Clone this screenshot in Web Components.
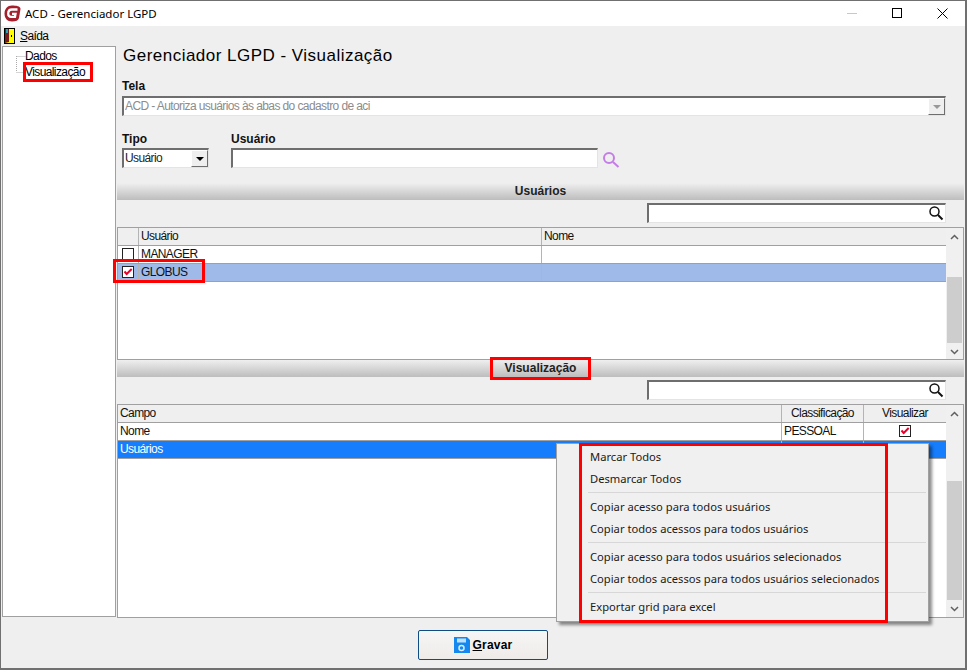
<!DOCTYPE html>
<html lang="pt-BR">
<head>
<meta charset="utf-8">
<title>ACD - Gerenciador LGPD</title>
<style>
  html, body { margin: 0; padding: 0; background: #fff; }
  body { width: 971px; height: 671px; overflow: hidden; font-family: "Liberation Sans", Arial, sans-serif; }
</style>
</head>
<body>
<app-window></app-window>
<script>
const base = `
  * { box-sizing: border-box; }
  :host { box-sizing: border-box; font-family: "Liberation Sans", Arial, sans-serif; font-size: 12px; letter-spacing: -.6px; color: #000; }
`;

class TitleBar extends HTMLElement {
  constructor() {
    super();
    this.attachShadow({ mode: 'open' }).innerHTML = `
      <style>${base}
        :host { display: flex; align-items: center; height: 25px; background: #fff; padding-left: 3px; letter-spacing: 0; }
        .name { margin-left: 4px; font-family: "Noto Sans", sans-serif; font-size: 11.500px; }
        .btns { margin-left: auto; display: flex; align-items: center; }
        .b { width: 45px; height: 25px; display: flex; align-items: center; justify-content: center; }
      </style>
      <svg width="17" height="17" viewBox="0 0 17 17">
        <path d="M8 .500C12 .500 16.500 1 16.500 4L15 13c-.500 2.500-3 3.500-7 3.500C3 16.500.500 13 .500 8.500S3.500.500 8 .500z" fill="#a3202c"/>
        <path d="M13.500 4.500H8C5.500 4.500 4.200 6.500 4.200 8.800c0 1.800 1 3 3 3H11l.5-3H8" fill="none" stroke="#fff" stroke-width="2.300"/>
      </svg>
      <span class="name">ACD - Gerenciador LGPD</span>
      <div class="btns">
        <div class="b"><svg width="11" height="11"><path d="M0 5.500h10" stroke="#c8c8c8"/></svg></div>
        <div class="b"><svg width="11" height="11"><rect x=".5" y=".5" width="9" height="9" fill="none" stroke="#000"/></svg></div>
        <div class="b"><svg width="11" height="11"><path d="M.5.500l10 10M10.500.500l-10 10" stroke="#000" fill="none"/></svg></div>
      </div>`;
  }
}

class MenuBar extends HTMLElement {
  constructor() {
    super();
    this.attachShadow({ mode: 'open' }).innerHTML = `
      <style>${base}
        :host { display: flex; align-items: center; height: 20px; padding-left: 3px; background: #efefef; }
        span { margin-left: 5px; }
        u { text-underline-offset: 1px; }
      </style>
      <svg width="11" height="16" viewBox="0 0 11 16">
        <rect width="11" height="16" fill="#000"/>
        <rect x="1" y="1" width="9" height="14" fill="#ff0"/>
        <path d="M1 1h4v13l-4 1z" fill="#7a1c1c"/>
        <rect x="2" y="1" width="2" height="4" fill="#2aa6b8"/>
        <rect x="7" y="7" width="1" height="2" fill="#000"/>
      </svg>
      <span><u>S</u>aída</span>`;
  }
}

class TreeNav extends HTMLElement {
  constructor() {
    super();
    this.attachShadow({ mode: 'open' }).innerHTML = `
      <style>${base}
        :host { display: block; width: 114px; height: 571px; background: #fff; border: 1px solid #a0a0a0; position: relative; padding: 1px 0 0 22px; }
        div.item { height: 16px; line-height: 16px; }
        svg { position: absolute; left: 10px; top: 0; }
      </style>
      <svg width="14" height="30"><path d="M3.500 9.500h10M3.500 9v16M3.500 25.500h10" stroke="#aaa" stroke-dasharray="1 1" fill="none"/></svg>
      <div class="item">Dados</div>
      <div class="item">Visualização</div>`;
  }
}

class FieldLabel extends HTMLElement {
  constructor() {
    super();
    this.attachShadow({ mode: 'open' }).innerHTML = `
      <style>${base}
        :host { display: block; font-size: 12px; font-weight: bold; height: 14px; line-height: 14px; letter-spacing: 0; color: #111; }
      </style><slot></slot>`;
  }
}

class SunkenBox extends HTMLElement {
  constructor() {
    super();
    const drop = this.getAttribute('drop');
    const disabled = this.hasAttribute('disabled');
    const search = this.hasAttribute('search');
    this.attachShadow({ mode: 'open' }).innerHTML = `
      <style>${base}
        :host { display: flex; height: 20px; background: #fff; border: 1px solid; border-color: #6e6e6e #e4e4e4 #e4e4e4 #6e6e6e; border-top-width: 2px; border-left-width: 2px; align-items: center; padding-left: 1px; position: relative; }
        .t { flex: 1; color: ${disabled ? '#8c8c8c' : '#222'}; white-space: nowrap; padding-bottom: 1px; }
        .arrow { width: 17px; height: 17px; background: #efefef; border: 1px solid; border-color: #fff #6e6e6e #6e6e6e #fff; display: flex; align-items: center; justify-content: center; flex: none; }
        .arrow i { width: 0; height: 0; border: 4px solid transparent; border-bottom-width: 0; border-top: 4px solid ${disabled ? '#999' : '#000'}; }
        svg { position: absolute; right: 1px; top: 0; }
      </style>
      <span class="t"><slot></slot></span>
      ${drop !== null ? '<span class="arrow"><i></i></span>' : ''}
      ${search ? `<svg width="16" height="16" viewBox="0 0 16 16"><circle cx="6.500" cy="6.500" r="4.500" fill="none" stroke="#111" stroke-width="1.500"/><path d="M10 10l4.500 4.500" stroke="#111" stroke-width="2"/></svg>` : ''}`;
  }
}

class SectionBar extends HTMLElement {
  constructor() {
    super();
    this.attachShadow({ mode: 'open' }).innerHTML = `
      <style>${base}
        :host { display: flex; justify-content: center; align-items: center; height: 17px; padding-bottom: 2px; font-size: 12px; letter-spacing: 0; font-weight: bold; color: #222; background: linear-gradient(#efefef, #bdbdbd); }
      </style><slot></slot>`;
  }
}

class CheckBox extends HTMLElement {
  constructor() {
    super();
    const on = this.hasAttribute('checked');
    this.attachShadow({ mode: 'open' }).innerHTML = `
      <style>:host { box-sizing: border-box; display: inline-flex; width: 12px; height: 12px; background: #fff; border: 1px solid #222; }</style>
      ${on ? '<svg width="10" height="10" viewBox="0 0 10 10"><path d="M1.500 4.500l2.200 2.500 5-5" fill="none" stroke="#e8002a" stroke-width="2"/></svg>' : ''}`;
  }
}

class ScrollBar extends HTMLElement {
  constructor() {
    super();
    const start = this.getAttribute('start');
    const size = this.getAttribute('size');
    this.attachShadow({ mode: 'open' }).innerHTML = `
      <style>${base}
        :host { display: flex; flex-direction: column; width: 17px; background: #f0f0f0; flex: none; }
        .a { height: 18px; display: flex; align-items: center; justify-content: center; flex: none; }
        .track { flex: 1; padding: ${start}px 1px 0 1px; }
        .thumb { height: ${size}px; background: #cdcdcd; }
      </style>
      <div class="a"><svg width="9" height="6"><path d="M1 5l3.500-3.500L8 5" fill="none" stroke="#606060" stroke-width="1.500"/></svg></div>
      <div class="track"><div class="thumb"></div></div>
      <div class="a"><svg width="9" height="6"><path d="M1 1l3.500 3.500L8 1" fill="none" stroke="#606060" stroke-width="1.500"/></svg></div>`;
  }
}

class DataGrid extends HTMLElement {
  constructor() {
    super();
    this.attachShadow({ mode: 'open' }).innerHTML = `
      <style>${base}
        :host { display: flex; background: #fff; border: 1px solid #a0a0a0; }
        .cols { flex: 1; min-width: 0; }
      </style>
      <div class="cols"><slot></slot></div>
      <slot name="bar"></slot>`;
  }
}

class GridRow extends HTMLElement {
  constructor() {
    super();
    const cols = this.getAttribute('cols');
    const kind = this.getAttribute('kind');
    const bg = { head: '#efefef', soft: '#9fbae8', sel: '#167dfd' }[kind] || '#fff';
    this.attachShadow({ mode: 'open' }).innerHTML = `
      <style>${base}
        :host { display: grid; grid-template-columns: ${cols}; height: 18px; background: ${bg}; border-bottom: 1px solid #a0a0a0; color: ${kind === 'sel' ? '#fff' : '#111'}; }
      </style><slot></slot>`;
  }
}

class GridCell extends HTMLElement {
  constructor() {
    super();
    const center = this.hasAttribute('center');
    this.attachShadow({ mode: 'open' }).innerHTML = `
      <style>${base}
        :host { display: flex; align-items: center; color: inherit; overflow: hidden; white-space: nowrap; padding: 0 0 1px 2px; border-right: 1px solid #b4b4b4; ${center ? 'justify-content: center; padding-left: 0;' : ''} }
        :host(:last-child) { border-right: 0; }
      </style><slot></slot>`;
  }
}

class ContextMenu extends HTMLElement {
  constructor() {
    super();
    this.attachShadow({ mode: 'open' }).innerHTML = `
      <style>${base}
        :host { position: absolute; left: 555px; top: 442px; width: 373px; height: 179px; background: #f0f0f0; border: 1px solid #a0a0a0; box-shadow: 3px 3px 3px rgba(0,0,0,.45); padding: 2px 2px 0; font-family: "Noto Sans", sans-serif; font-size: 11.200px; letter-spacing: 0; color: #1a1a1a; }
      </style><slot></slot>`;
  }
}

class MenuEntry extends HTMLElement {
  constructor() {
    super();
    this.attachShadow({ mode: 'open' }).innerHTML = `
      <style>
        :host { display: flex; align-items: center; height: 22px; padding: 0 0 2px 31px; white-space: nowrap; box-sizing: border-box; }
      </style><slot></slot>`;
  }
}

class MenuRule extends HTMLElement {
  constructor() {
    super();
    this.attachShadow({ mode: 'open' }).innerHTML = `
      <style>:host { display: block; height: 1px; background: #d7d7d7; margin: 2px 0 3px 29px; width: 338px; }</style>`;
  }
}

class SaveButton extends HTMLElement {
  constructor() {
    super();
    this.attachShadow({ mode: 'open' }).innerHTML = `
      <style>${base}
        :host { display: flex; align-items: center; justify-content: center; width: 130px; height: 30px; padding-bottom: 1px; border: 1px solid #0f4c81; border-radius: 2px; background: linear-gradient(#f6f6f6, #efebe8); font-size: 12px; font-weight: bold; letter-spacing: .2px; gap: 3px; }
      </style>
      <svg width="16" height="16" viewBox="0 0 16 16">
        <path d="M0 0h13l3 3v13H0z" fill="#1488ee"/>
        <rect x="3" y="1.500" width="9" height="4" fill="#bfe0fb"/>
        <circle cx="7.500" cy="11" r="2.500" fill="none" stroke="#d8ecfd" stroke-width="1.500"/>
      </svg>
      <span><u>G</u>ravar</span>`;
  }
}

class RedMark extends HTMLElement {
  constructor() {
    super();
    const [x, y, w, h] = this.getAttribute('box').split(' ');
    this.attachShadow({ mode: 'open' }).innerHTML = `
      <style>:host { position: absolute; left: ${x}px; top: ${y}px; width: ${w}px; height: ${h}px; border: 3px solid #f00; box-sizing: border-box; pointer-events: none; }</style>`;
  }
}

class AppWindow extends HTMLElement {
  constructor() {
    super();
    const usersCols = '21px 403px 1fr';
    const viewCols = '664px 82px 1fr';
    this.attachShadow({ mode: 'open' }).innerHTML = `
      <style>${base}
        :host { display: flex; flex-direction: column; position: relative; width: 967px; height: 670px; background: #efefef; border: 1px solid #707070; border-width: 1px 2px 2px 1px; }
        .body { display: flex; padding-left: 1px; flex: 1; gap: 1px; }
        .main { flex: 1; min-width: 0; display: flex; flex-direction: column; padding-right: 1px; }
        h1 { margin: 0; height: 20px; font-size: 17px; line-height: 20px; font-weight: normal; padding-left: 6px; letter-spacing: .48px; white-space: nowrap; }
        .tela { padding: 13px 18px 0 5px; }
        .tela sunken-box { margin-top: 3px; }
        .row { display: flex; gap: 22px; padding: 16px 0 0 5px; align-items: flex-start; }
        .row sunken-box { margin-top: 2px; }
        .usearch { display: flex; align-items: flex-start; }
        .usearch svg { margin: 5px 0 0 4px; }
        .bar { margin-top: 14px; }
        .search { display: flex; justify-content: flex-end; padding: 3px 18px 4px 0; }
        .search sunken-box { width: 299px; }
        .users { height: 133px; }
        .views { height: 214px; }
        .foot { display: flex; justify-content: center; padding: 12px 115px 0 0; }
      </style>
      <title-bar></title-bar>
      <menu-bar></menu-bar>
      <div class="body">
        <tree-nav></tree-nav>
        <div class="main">
          <h1>Gerenciador LGPD - Visualização</h1>
          <div class="tela">
            <field-label>Tela</field-label>
            <sunken-box disabled drop="1">ACD - Autoriza usuários às abas do cadastro de aci</sunken-box>
          </div>
          <div class="row">
            <div style="width:87px">
              <field-label>Tipo</field-label>
              <sunken-box drop="1">Usuário</sunken-box>
            </div>
            <div>
              <field-label>Usuário</field-label>
              <div class="usearch">
                <sunken-box style="width:367px"></sunken-box>
                <svg width="18" height="18" viewBox="0 0 18 18"><circle cx="7" cy="7" r="5" fill="none" stroke="#c47de8" stroke-width="2"/><path d="M11 11l5.500 5" stroke="#c47de8" stroke-width="2"/></svg>
              </div>
            </div>
          </div>
          <section-bar class="bar">Usuários</section-bar>
          <div class="search"><sunken-box search></sunken-box></div>
          <data-grid class="users">
            <grid-row kind="head" cols="${usersCols}"><grid-cell></grid-cell><grid-cell>Usuário</grid-cell><grid-cell>Nome</grid-cell></grid-row>
            <grid-row cols="${usersCols}"><grid-cell center><check-box></check-box></grid-cell><grid-cell>MANAGER</grid-cell><grid-cell></grid-cell></grid-row>
            <grid-row kind="soft" cols="${usersCols}"><grid-cell center><check-box checked></check-box></grid-cell><grid-cell>GLOBUS</grid-cell><grid-cell></grid-cell></grid-row>
            <scroll-bar slot="bar" start="31" size="66"></scroll-bar>
          </data-grid>
          <section-bar>Visualização</section-bar>
          <div class="search"><sunken-box search></sunken-box></div>
          <data-grid class="views">
            <grid-row kind="head" cols="${viewCols}"><grid-cell>Campo</grid-cell><grid-cell center>Classificação</grid-cell><grid-cell center>Visualizar</grid-cell></grid-row>
            <grid-row cols="${viewCols}"><grid-cell>Nome</grid-cell><grid-cell>PESSOAL</grid-cell><grid-cell center><check-box checked></check-box></grid-cell></grid-row>
            <grid-row kind="sel" cols="${viewCols}"><grid-cell>Usuários</grid-cell><grid-cell></grid-cell><grid-cell></grid-cell></grid-row>
            <scroll-bar slot="bar" start="58" size="119"></scroll-bar>
          </data-grid>
          <div class="foot"><save-button></save-button></div>
        </div>
      </div>
      <context-menu>
        <menu-entry>Marcar Todos</menu-entry>
        <menu-entry>Desmarcar Todos</menu-entry>
        <menu-rule></menu-rule>
        <menu-entry>Copiar acesso para todos usuários</menu-entry>
        <menu-entry>Copiar todos acessos para todos usuários</menu-entry>
        <menu-rule></menu-rule>
        <menu-entry>Copiar acesso para todos usuários selecionados</menu-entry>
        <menu-entry>Copiar todos acessos para todos usuários selecionados</menu-entry>
        <menu-rule></menu-rule>
        <menu-entry>Exportar grid para excel</menu-entry>
      </context-menu>
      <red-mark box="22 61 70 20"></red-mark>
      <red-mark box="112 258 92 24"></red-mark>
      <red-mark box="489 356 101 23"></red-mark>
      <red-mark box="578 442 309 180"></red-mark>`;
  }
}

[['title-bar', TitleBar], ['menu-bar', MenuBar], ['tree-nav', TreeNav], ['field-label', FieldLabel],
 ['sunken-box', SunkenBox], ['section-bar', SectionBar], ['check-box', CheckBox], ['scroll-bar', ScrollBar],
 ['data-grid', DataGrid], ['grid-row', GridRow], ['grid-cell', GridCell], ['context-menu', ContextMenu],
 ['menu-entry', MenuEntry], ['menu-rule', MenuRule], ['save-button', SaveButton], ['red-mark', RedMark],
 ['app-window', AppWindow]].forEach(([name, cls]) => customElements.define(name, cls));
</script>
</body>
</html>
